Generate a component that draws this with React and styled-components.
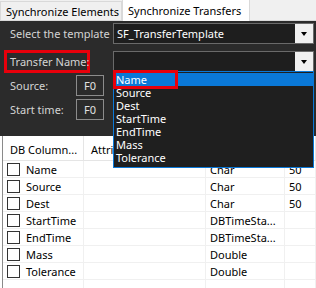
import React from 'react';
import styled, { createGlobalStyle } from 'styled-components';

const GlobalStyle = createGlobalStyle`
    body {
        margin: 0;
        background: #ffffff;
        font-family: "Noto Sans", "Open Sans", sans-serif;
        font-size: 11px;
    }
`;

const Window = styled.div`
    width: 316px;
    height: 288px;
    overflow: hidden;
    display: flex;
    flex-direction: column;
`;

const TabStrip = styled.div`
    flex: none;
    height: 21px;
    display: flex;
    align-items: flex-end;
    background: #f0f0f0;
    border-bottom: 1px solid #d9d9d9;
    box-sizing: border-box;
`;

const Tab = styled.div`
    height: ${(p) => (p.active ? '22px' : '19px')};
    width: ${(p) => (p.active ? '128px' : '122px')};
    padding-left: 5px;
    display: flex;
    align-items: center;
    box-sizing: border-box;
    background: ${(p) => (p.active ? '#ffffff' : '#f0f0f0')};
    border: 1px solid #d9d9d9;
    border-bottom: none;
    margin-bottom: ${(p) => (p.active ? '-1px' : '0')};
    color: #000;
    white-space: nowrap;
`;

const Panel = styled.div`
    flex: none;
    height: 115px;
    background: #2b2b2b;
    color: #d4d4d4;
    padding: 2px 2px 0 0;
    box-sizing: border-box;
    display: flex;
    flex-direction: column;
`;

const FieldRow = styled.div`
    display: grid;
    grid-template-columns: 113px 1fr;
    align-items: center;
    height: 21px;
    margin-bottom: ${(p) => p.gap || 0}px;
`;

const Label = styled.div`
    padding-left: 10px;
    white-space: nowrap;
`;

const MarkedLabel = styled.div`
    margin-left: 4px;
    width: 86px;
    height: 23px;
    box-sizing: border-box;
    border: 3px solid #e8000b;
    padding-left: 3px;
    display: flex;
    align-items: center;
    white-space: nowrap;
`;

const Combo = styled.div`
    position: relative;
    height: 21px;
    display: flex;
    border: 1px solid #6a6a6a;
    box-sizing: border-box;
    background: #1e1e1e;
    color: #ffffff;
`;

const ComboText = styled.div`
    flex: 1;
    padding-left: 3px;
    display: flex;
    align-items: center;
`;

const ComboButton = styled.div`
    width: 18px;
    background: #f0f0f0;
    display: flex;
    align-items: center;
    justify-content: center;
    &::after {
        content: '';
        border-left: 3.5px solid transparent;
        border-right: 3.5px solid transparent;
        border-top: 4px solid #000;
    }
`;

const DropList = styled.div`
    position: absolute;
    top: 19px;
    left: -1px;
    right: -1px;
    height: 97px;
    box-sizing: border-box;
    border: 1px solid #0a78d7;
    background: #1f1f1f;
    color: #ffffff;
    padding-top: 1px;
    z-index: 5;
`;

const DropItem = styled.div`
    height: 13px;
    line-height: 13px;
    padding-left: 2px;
    background: ${(p) => (p.selected ? '#0a78d7' : 'transparent')};
`;

const ItemMark = styled.div`
    position: absolute;
    top: -2px;
    left: -1px;
    width: 65px;
    height: 19px;
    box-sizing: border-box;
    border: 3px solid #e8000b;
`;

const TimeRow = styled.div`
    display: grid;
    grid-template-columns: 76px 28px;
    align-items: center;
    height: 21px;
    margin-top: ${(p) => p.top || 0}px;
`;

const ValueBox = styled.div`
    height: 21px;
    box-sizing: border-box;
    border: 1px solid #8c8c8c;
    display: flex;
    align-items: center;
    justify-content: center;
    color: #e0e0e0;
`;

const Table = styled.div`
    flex: 1;
    min-height: 0;
    overflow: hidden;
    margin-left: 2px;
    border-left: 1px solid #8a8a8a;
    background: #ffffff;
    color: #000;
`;

const columns = '81px 122px 79px 1fr';

const HeaderRow = styled.div`
    display: grid;
    grid-template-columns: ${columns};
    height: 25px;
    border-bottom: 1px solid #e5e5e5;
    box-sizing: border-box;
`;

const HeaderCell = styled.div`
    display: flex;
    align-items: center;
    padding-left: 7px;
    padding-top: 3px;
    white-space: nowrap;
    overflow: hidden;
    border-right: 1px solid #e5e5e5;
`;

const Row = styled.div`
    display: grid;
    grid-template-columns: ${columns};
    height: 17px;
    border-bottom: 1px solid #f0f0f0;
    box-sizing: border-box;
`;

const Cell = styled.div`
    display: flex;
    align-items: center;
    gap: 6px;
    padding-left: 4px;
    white-space: nowrap;
    overflow: hidden;
    border-right: 1px solid #f0f0f0;
`;

const Check = styled.span`
    width: 13px;
    height: 13px;
    box-sizing: border-box;
    border: 1px solid #333;
    background: #fff;
    flex: none;
`;

const fields = [
    { name: 'Name', type: 'Char', size: '50' },
    { name: 'Source', type: 'Char', size: '50' },
    { name: 'Dest', type: 'Char', size: '50' },
    { name: 'StartTime', type: 'DBTimeSta...', size: '' },
    { name: 'EndTime', type: 'DBTimeSta...', size: '' },
    { name: 'Mass', type: 'Double', size: '' },
    { name: 'Tolerance', type: 'Double', size: '' },
];

const App = () => {
    return (
        <Window>
            <GlobalStyle />
            <TabStrip>
                <Tab>Synchronize Elements</Tab>
                <Tab active>Synchronize Transfers</Tab>
            </TabStrip>
            <Panel>
                <FieldRow gap={6}>
                    <Label>Select the template</Label>
                    <Combo>
                        <ComboText>SF_TransferTemplate</ComboText>
                        <ComboButton />
                    </Combo>
                </FieldRow>
                <FieldRow>
                    <MarkedLabel>Transfer Name:</MarkedLabel>
                    <Combo>
                        <ComboText />
                        <ComboButton />
                        <DropList>
                            {fields.map((f, i) => (
                                <DropItem key={f.name} selected={i === 0}>
                                    {f.name}
                                </DropItem>
                            ))}
                            <ItemMark />
                        </DropList>
                    </Combo>
                </FieldRow>
                <TimeRow top={4}>
                    <Label>Source:</Label>
                    <ValueBox>F0</ValueBox>
                </TimeRow>
                <TimeRow top={3}>
                    <Label>Start time:</Label>
                    <ValueBox>F0</ValueBox>
                </TimeRow>
            </Panel>
            <Table>
                <HeaderRow>
                    <HeaderCell>DB Column...</HeaderCell>
                    <HeaderCell>Attribute</HeaderCell>
                    <HeaderCell>Type</HeaderCell>
                    <HeaderCell>Size</HeaderCell>
                </HeaderRow>
                {fields.map((f) => (
                    <Row key={f.name}>
                        <Cell>
                            <Check />
                            {f.name}
                        </Cell>
                        <Cell />
                        <Cell>{f.type}</Cell>
                        <Cell>{f.size}</Cell>
                    </Row>
                ))}
                <Row>
                    <Cell />
                    <Cell />
                    <Cell />
                    <Cell />
                </Row>
            </Table>
        </Window>
    );
};

export default App;
